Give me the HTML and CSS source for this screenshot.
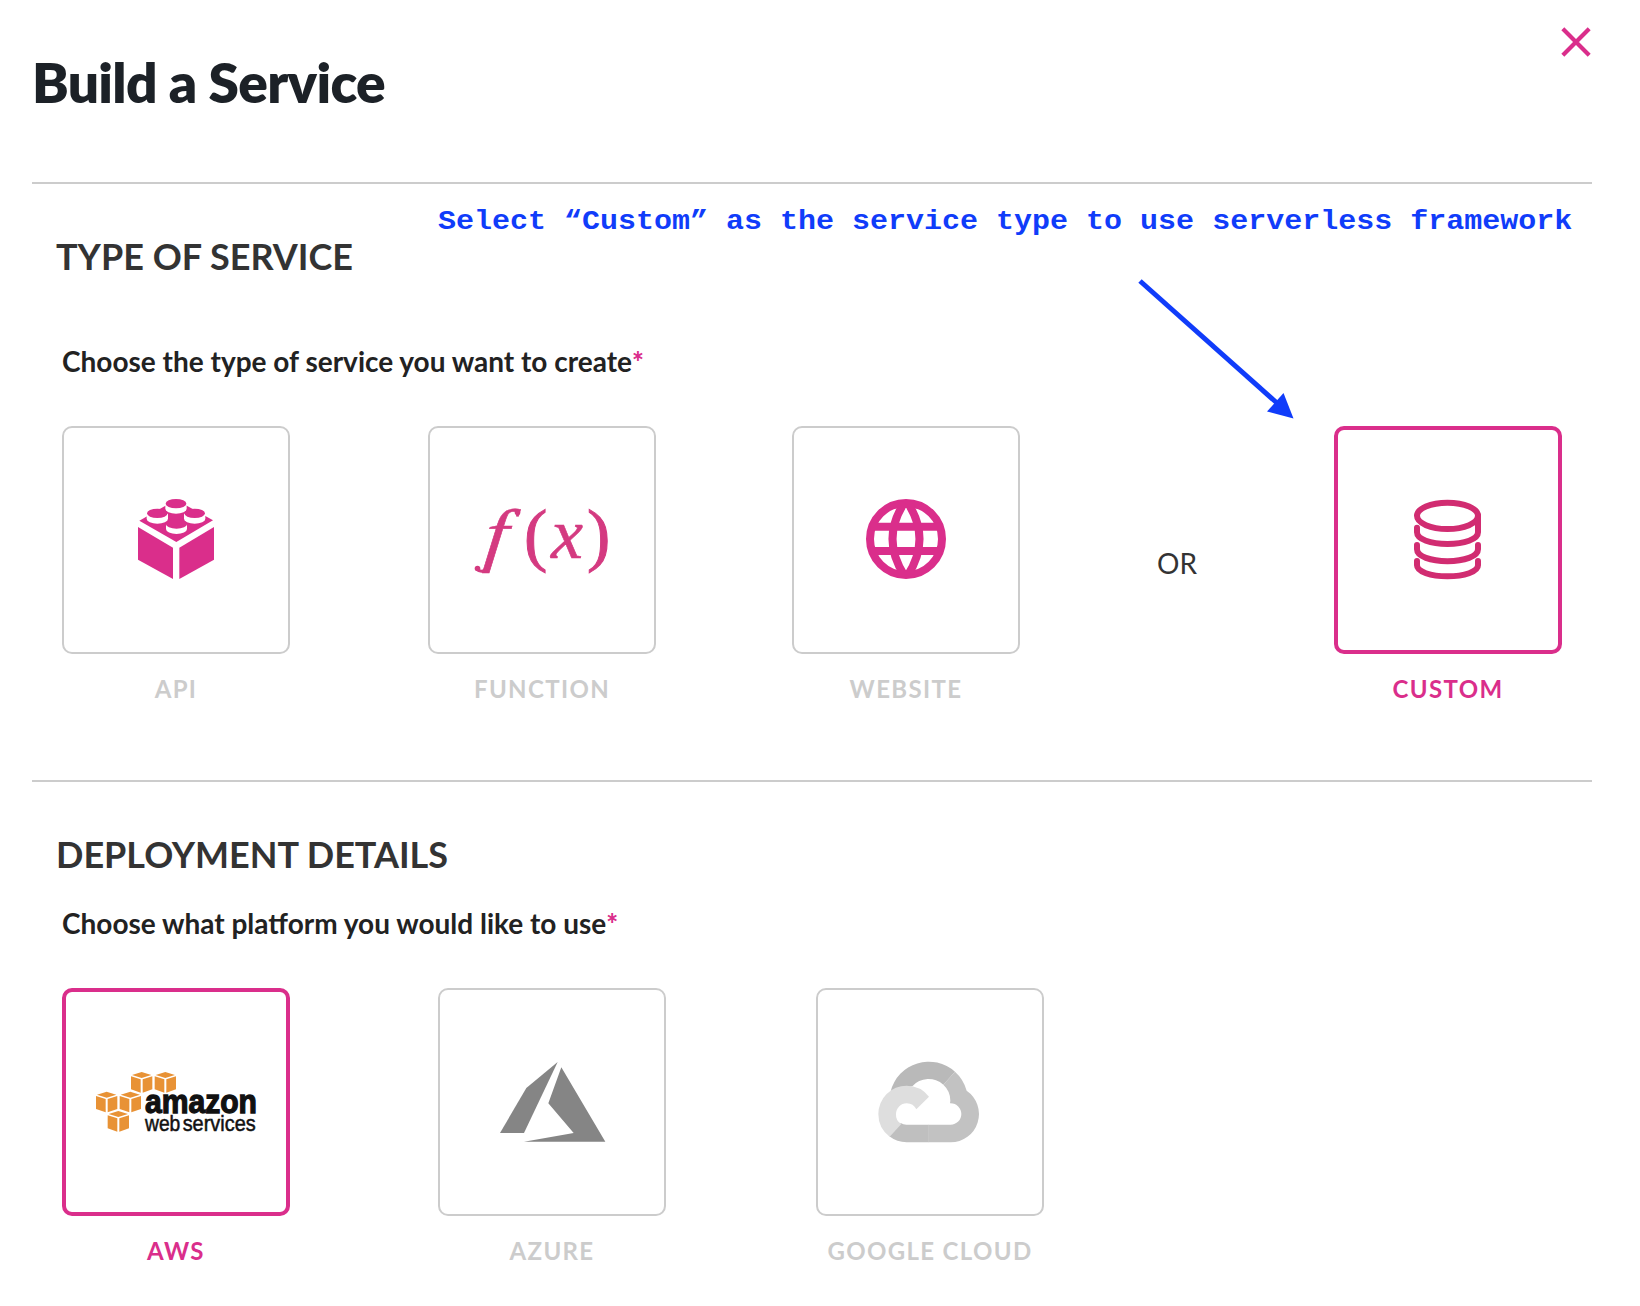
FILE: index.html
```html
<!DOCTYPE html>
<html lang="en">
<head>
<meta charset="utf-8">
<title>Build a Service</title>
<link rel="stylesheet" href="styles.css">
</head>
<body>
<main class="modal">
  <header class="modal-header">
    <h1 class="title">Build a Service</h1>
    <button class="close" aria-label="Close">
      <svg width="32" height="32" viewBox="0 0 32 32"><path d="M4.300 4.300 27.700 27.700M27.700 4.300 4.300 27.700"/></svg>
    </button>
  </header>

  <section class="section section-type">
    <h2 class="heading">TYPE OF SERVICE</h2>
    <p class="question">Choose the type of service you want to create<span class="required">*</span></p>
    <div class="options options-type">
      <div class="option">
        <div class="card">
          <svg width="120" height="120" viewBox="-12 0 360 360">
            <g class="pink-fill">
              <path d="M58 122 168 59 279 121 169 186Z"/>
              <path d="M54 141 159 203V297L54 239Z"/>
              <path d="M282 141 178 203V297L282 239Z"/>
            </g>
            <g class="white-fill">
              <path d="M136 69h64v17a32 15 0 0 1-64 0Z"/>
              <path d="M80 100h64v16a32 15 0 0 1-64 0Z"/>
              <path d="M192 100h64v16a32 15 0 0 1-64 0Z"/>
              <path d="M138 133h63v14a31.500 15 0 0 1-63 0Z"/>
            </g>
            <g class="pink-fill">
              <ellipse cx="168" cy="71" rx="31" ry="14"/>
              <ellipse cx="112" cy="100" rx="31" ry="14"/>
              <ellipse cx="224" cy="100" rx="31" ry="14"/>
              <ellipse cx="169.500" cy="132" rx="32" ry="14"/>
            </g>
          </svg>
        </div>
        <span class="label">API</span>
      </div>
      <div class="option">
        <div class="card">
          <svg class="fx" width="160" height="100" viewBox="462 490 160 100">
            <text transform="translate(483 558) skewX(-6) scale(1.15 .97)" font-style="italic">f</text>
            <path class="fx-tail" d="M487 569Q481 573.500 476.500 569"/>
            <circle cx="477.500" cy="568.500" r="2.800"/>
            <circle cx="517.500" cy="512.500" r="2.800"/>
            <text class="fx-paren" x="524" y="557.500">(</text>
            <text x="551" y="558" font-style="italic">x</text>
            <text class="fx-paren" x="587" y="557.500">)</text>
          </svg>
        </div>
        <span class="label">FUNCTION</span>
      </div>
      <div class="option">
        <div class="card">
          <svg class="globe" width="120" height="120" viewBox="-12 0 360 360">
            <circle cx="168" cy="177" r="108"/>
            <path d="M163 68Q92 177 163 286M173 68Q244 177 173 286M62 140H274M62 213H274"/>
          </svg>
        </div>
        <span class="label">WEBSITE</span>
      </div>
      <div class="or">OR</div>
      <div class="option selected">
        <div class="card">
          <svg class="database" width="120" height="120" viewBox="-6 0 360 360">
            <ellipse cx="172.500" cy="107.500" rx="91.500" ry="39.500"/>
            <path d="M81 143v14C81 178 122 192 172.500 192S264 178 264 157V107"/>
            <path d="M81 195v13C81 229 122 243.500 172.500 243.500S264 229 264 208V195"/>
            <path d="M81 243v13C81 275 122 289 172.500 289S264 275 264 256V243"/>
          </svg>
        </div>
        <span class="label">CUSTOM</span>
      </div>
    </div>
  </section>

  <section class="section section-deploy">
    <h2 class="heading">DEPLOYMENT DETAILS</h2>
    <p class="question">Choose what platform you would like to use<span class="required">*</span></p>
    <div class="options options-deploy">
      <div class="option selected">
        <div class="card">
          <svg width="180" height="80" viewBox="18 36 540 240">
            <defs>
              <g id="cube">
                <path d="M3 9 32 0 61 9 32 18Z"/>
                <path d="M0 13 29 22V62L0 52Z"/>
                <path d="M64 13 35 22V62L64 52Z"/>
              </g>
            </defs>
            <g class="orange-fill">
              <use href="#cube" x="153" y="66"/>
              <use href="#cube" x="224" y="66"/>
              <use href="#cube" x="48" y="125"/>
              <use href="#cube" x="119" y="125"/>
              <use href="#cube" x="83" y="183"/>
            </g>
            <g class="aws-text">
              <text class="aws-name" x="195" y="190" textLength="336" lengthAdjust="spacingAndGlyphs">amazon</text>
              <text x="195" y="244" textLength="106" lengthAdjust="spacingAndGlyphs">web</text>
              <text x="308" y="244" textLength="219" lengthAdjust="spacingAndGlyphs">services</text>
            </g>
          </svg>
        </div>
        <span class="label">AWS</span>
      </div>
      <div class="option">
        <div class="card">
          <svg class="azure" width="120" height="120" viewBox="36 6 360 360">
            <path d="M233 66 139 144 60 279H132Z"/>
            <path d="M244 82 205 190 281 279 132 305H376Z"/>
          </svg>
        </div>
        <span class="label">AZURE</span>
      </div>
      <div class="option">
        <div class="card">
          <svg width="120" height="120" viewBox="30 6 360 360">
            <path fill="#b9b9b9" d="M92 154A118 118 0 0 1 285 95L250 134A65 65 0 0 0 157 139Z"/>
            <path fill="#c2c2c2" d="M285 95A118 118 0 0 1 320 152A85 85 0 0 1 272 307H205V254H272A32 32 0 0 0 272 190H270L271 182A65 65 0 0 0 250 134Z"/>
            <path fill="#bfbfbf" d="M206 254H140A32 32 0 0 1 122 249L88 289A85 85 0 0 0 140 307H206Z"/>
            <path fill="#dedede" d="M89 290A85 85 0 0 1 55 222A85 85 0 0 1 140 137A85 85 0 0 1 207 170L169 208A32 32 0 0 0 140 190A32 32 0 0 0 108 222A32 32 0 0 0 124 252Z"/>
          </svg>
        </div>
        <span class="label">GOOGLE CLOUD</span>
      </div>
    </div>
  </section>

  <p class="note">Select “Custom” as the service type to use serverless framework</p>
  <svg class="arrow" width="160" height="144" viewBox="1136 277 160 144">
    <path class="arrow-shaft" d="M1140 281 1277 403"/>
    <path class="arrow-head" d="M1293.500 418.500 1283.500 393 1267 411.500Z"/>
  </svg>
</main>
</body>
</html>
```
FILE: styles.css
```css
* { box-sizing: border-box; }

body {
  margin: 0;
  background: #fff;
  font-family: Lato, "Liberation Sans", sans-serif;
}

h1, h2, p { margin: 0; }

svg { display: block; overflow: visible; }

.modal {
  position: relative;
  width: 1640px;
  height: 1306px;
  padding: 0 48px 0 32px;
  overflow: hidden;
}

.modal-header {
  display: flex;
  justify-content: space-between;
  align-items: flex-start;
  height: 182px;
}

.title {
  padding-top: 48px;
  font-size: 55px;
  line-height: 68px;
  font-weight: 800;
  letter-spacing: -0.7px;
  color: #1c2127;
}

.close {
  margin: 26px 0 0;
  padding: 0;
  border: 0;
  background: none;
}

.close path {
  fill: none;
  stroke: #da2e8b;
  stroke-width: 4.2;
  stroke-linecap: square;
}

.section { border-top: 2px solid #ccc; }

.section-type { height: 598px; padding-top: 50px; }
.section-deploy { padding-top: 50px; }

.heading {
  padding-left: 24px;
  font-size: 36px;
  line-height: 44px;
  font-weight: 700;
  color: #333;
}

.question {
  padding-left: 30px;
  font-size: 28px;
  line-height: 34px;
  font-weight: 700;
  color: #222;
}

.section-type .question { margin-top: 66px; }
.section-deploy .question { margin-top: 30px; }

.required { color: #da2e8b; font-weight: 900; }

.options {
  display: grid;
  margin: 48px 0 0 30px;
}

.options-type { grid-template-columns: 366px 364px 228px 314px 228px; }
.options-deploy { grid-template-columns: 376px 378px 228px; }

.option {
  display: flex;
  flex-direction: column;
  align-items: center;
  gap: 20px;
  width: 228px;
}

.card {
  display: flex;
  align-items: center;
  justify-content: center;
  width: 228px;
  height: 228px;
  border: 2px solid #ccc;
  border-radius: 10px;
}

.label {
  font-size: 24px;
  line-height: 30px;
  font-weight: 700;
  letter-spacing: 1.35px;
  color: #ccc;
}

.selected .card { border: 4px solid #da2e8b; }
.selected .label { color: #da2e8b; }

.or {
  padding-top: 120px;
  font-size: 28px;
  line-height: 34px;
  text-align: center;
  color: #333;
}

.pink-fill { fill: #da2e8b; }
.white-fill { fill: #fff; }
.orange-fill { fill: #e89235; }
.azure { fill: #858585; }

.fx {
  fill: #d43a80;
  font-family: "Liberation Serif", serif;
  font-size: 72px;
}

.fx text { stroke: #d43a80; stroke-width: 0.6; }
.fx .fx-paren { font-size: 70px; stroke-width: 1; }
.fx-tail { fill: none; stroke: #d43a80; stroke-width: 3; }

.globe {
  fill: none;
  stroke: #da2e8b;
  stroke-width: 24;
}

.database {
  fill: none;
  stroke: #d12c71;
  stroke-width: 18;
  stroke-linecap: round;
}

.aws-text {
  fill: #111;
  stroke: #111;
  stroke-width: 1.5;
  font-family: "Liberation Sans", sans-serif;
  font-size: 64px;
}

.aws-name {
  font-size: 102px;
  font-weight: 700;
  stroke-width: 4;
}

.note {
  position: absolute;
  left: 438px;
  top: 204px;
  font-family: "Liberation Mono", monospace;
  font-size: 30px;
  line-height: 34px;
  font-weight: 700;
  white-space: nowrap;
  color: #103cfa;
  transform: scaleY(0.9);
  transform-origin: 0 25px;
}

.arrow {
  position: absolute;
  left: 1136px;
  top: 277px;
}

.arrow-shaft { stroke: #103cfa; stroke-width: 5; }
.arrow-head { fill: #103cfa; }
```
